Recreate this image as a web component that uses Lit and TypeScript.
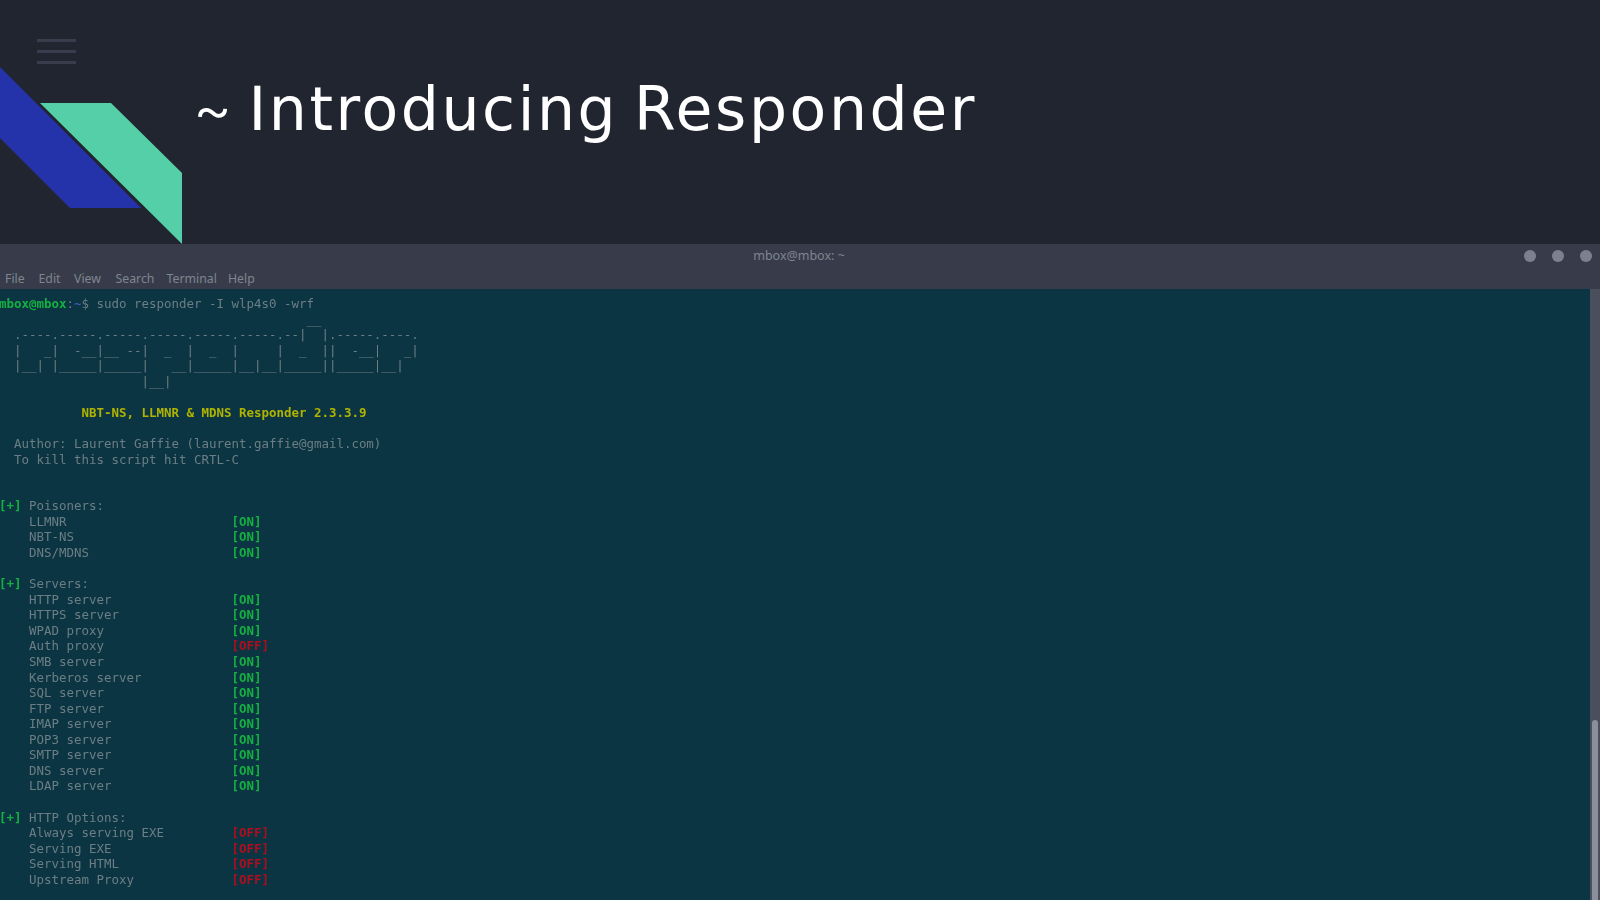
import { LitElement, html, css } from "lit";
import { customElement } from "lit/decorators.js";

type Row = [string, "ON" | "OFF"];
const pad = (s: string, n: number) => s.padEnd(n, " ");

@customElement("app-root")
export class AppRoot extends LitElement {
  static styles = css`
    :host { display: flex; flex-direction: column; width: 1600px; height: 900px; overflow: hidden; background: #212530; }
    .slide { height: 244px; flex: none; display: flex; position: relative; }
    .logo { width: 182px; height: 244px; flex: none; display: block; }
    .burger { position: absolute; left: 37px; top: 39px; width: 39px; display: flex; flex-direction: column; gap: 8px; }
    .burger i { display: block; height: 3px; background: #383d4e; }
    h1 { margin: 0; padding: 64px 0 0 11px; font: 400 60px/88px "DejaVu Sans", Inter, sans-serif; letter-spacing: 2.6px; word-spacing: -6px; color: #fff; white-space: pre; }
    .tilde { font-family: Inter, sans-serif; font-weight: 300; margin-right: -2px; }
    .titlebar { height: 26px; flex: none; box-sizing: border-box; background: #383c4a; display: flex; align-items: center; justify-content: center; position: relative; padding-bottom: 3px; font: 12.5px "Noto Sans", sans-serif; color: #7f8590; }
    .titlebar span { padding-right: 2px; }
    .dots { position: absolute; right: 8px; top: 6px; display: flex; gap: 16px; }
    .dots i { display: block; width: 12px; height: 12px; border-radius: 50%; background: #7c818f; }
    .menu { height: 19px; flex: none; background: #383c4a; display: grid; grid-template-columns: 33.5px 35.5px 41.5px 51px 61.5px auto; padding-left: 5px; font: 12.3px/18px "Noto Sans", sans-serif; color: #7f8590; }
    .term { flex: 1; display: flex; min-height: 0; background: #0c3543; }
    pre { flex: 1; margin: 0 0 0 -1px; padding: 7px 0 0 0; overflow: hidden; font: 12.46px/15.56px "DejaVu Sans Mono", monospace; color: #6c7e85; filter: blur(0.25px); }
    .g { color: #14b040; font-weight: 700; }
    .b { color: #3a5bb5; font-weight: 700; }
    .y { color: #b0b400; font-weight: 700; }
    .r { color: #b00d1e; font-weight: 700; }
    .scroll { width: 10px; flex: none; background: #4b4e5c; display: flex; flex-direction: column; justify-content: flex-end; align-items: center; }
    .thumb { width: 6px; height: 180px; background: #8b8f9c; border-radius: 3px 3px 0 0; }
  `;

  private row(r: Row) {
    return html`    ${pad(r[0], 27)}<span class=${r[1] === "ON" ? "g" : "r"}>[${r[1]}]</span>\n`;
  }

  render() {
    const poison: Row[] = [["LLMNR", "ON"], ["NBT-NS", "ON"], ["DNS/MDNS", "ON"]];
    const servers: Row[] = [
      ["HTTP server", "ON"], ["HTTPS server", "ON"], ["WPAD proxy", "ON"], ["Auth proxy", "OFF"],
      ["SMB server", "ON"], ["Kerberos server", "ON"], ["SQL server", "ON"], ["FTP server", "ON"],
      ["IMAP server", "ON"], ["POP3 server", "ON"], ["SMTP server", "ON"], ["DNS server", "ON"], ["LDAP server", "ON"],
    ];
    const http: Row[] = [["Always serving EXE", "OFF"], ["Serving EXE", "OFF"], ["Serving HTML", "OFF"], ["Upstream Proxy", "OFF"]];
    const art = [
      "                                         __",
      "  .----.-----.-----.-----.-----.-----.--|  |.-----.----.",
      "  |   _|  -__|__ --|  _  |  _  |     |  _  ||  -__|   _|",
      "  |__| |_____|_____|   __|_____|__|__|_____||_____|__|",
      "                   |__|",
    ].join("\n");
    return html`
      <div class="slide">
        <svg class="logo" viewBox="0 0 182 244">
          <polygon points="0,67 141,208 70,208 0,138" fill="#2433aa" />
          <polygon points="40,103 111,103 182,173 182,244" fill="#55cfa8" />
        </svg>
        <div class="burger"><i></i><i></i><i></i></div>
        <h1><span class="tilde">~</span> Introducing Responder</h1>
      </div>
      <div class="titlebar">
        <span>mbox@mbox: ~</span>
        <div class="dots"><i></i><i></i><i></i></div>
      </div>
      <div class="menu"><span>File</span><span>Edit</span><span>View</span><span>Search</span><span>Terminal</span><span>Help</span></div>
      <div class="term">
        <pre><span class="g">mbox@mbox</span>:<span class="b">~</span>$ sudo responder -I wlp4s0 -wrf
${art}

           <span class="y">NBT-NS, LLMNR &amp; MDNS Responder 2.3.3.9</span>

  Author: Laurent Gaffie (laurent.gaffie@gmail.com)
  To kill this script hit CRTL-C


<span class="g">[+]</span> Poisoners:
${poison.map((r) => this.row(r))}
<span class="g">[+]</span> Servers:
${servers.map((r) => this.row(r))}
<span class="g">[+]</span> HTTP Options:
${http.map((r) => this.row(r))}</pre>
        <div class="scroll"><div class="thumb"></div></div>
      </div>
    `;
  }
}
